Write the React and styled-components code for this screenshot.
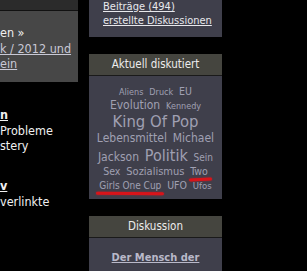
import React from 'react'
import styled, {createGlobalStyle} from 'styled-components'

const GlobalStyle = createGlobalStyle`
  html, body {
    margin: 0;
    padding: 0;
    background: #000;
  }
  body {
    font-family: "DejaVu Sans Condensed", "DejaVu Sans", sans-serif;
    color: #e6e6e6;
    overflow: hidden;
  }
`

const tags = [
  {label: 'Aliens', size: 9, lh: 12},
  {label: 'Druck', size: 9, lh: 12},
  {label: 'EU', size: 10.5, lh: 13},
  {label: 'Evolution', size: 12, lh: 15},
  {label: 'Kennedy', size: 9, lh: 12},
  {label: 'King Of Pop', size: 16.5, lh: 18},
  {label: 'Lebensmittel', size: 12, lh: 15},
  {label: 'Michael', size: 12, lh: 15},
  {label: 'Jackson', size: 12, lh: 15},
  {label: 'Politik', size: 16, lh: 19},
  {label: 'Sein', size: 10, lh: 13},
  {label: 'Sex', size: 10.5, lh: 13},
  {label: 'Sozialismus', size: 11, lh: 14},
  {label: 'Two', size: 10.5, lh: 13, marked: 'tilt'},
  {label: 'Girls One Cup', size: 10, lh: 13, marked: 'flat'},
  {label: 'UFO', size: 10.5, lh: 13},
  {label: 'Ufos', size: 9.5, lh: 12}
]

export default function App() {
  return (
    <>
      <GlobalStyle />
      <Page>
        <LeftColumn>
          <TopStrip />
          <InfoBox>
            <Line>en »</Line>
            <Line>
              <TextLink>k / 2012 und</TextLink>
            </Line>
            <Line>
              <TextLink>ein</TextLink>
            </Line>
          </InfoBox>
          <Entry>
            <EntryTitle>n</EntryTitle>
            <Line>Probleme</Line>
            <Line>stery</Line>
          </Entry>
          <Entry>
            <EntryTitle>v</EntryTitle>
            <Line>verlinkte</Line>
          </Entry>
        </LeftColumn>

        <RightColumn>
          <ProfileBox>
            <ProfileLink>Beiträge (494)</ProfileLink>
            <ProfileLink>erstellte Diskussionen</ProfileLink>
          </ProfileBox>

          <Panel>
            <PanelHeader>Aktuell diskutiert</PanelHeader>
            <CloudBody>
              {tags.map(tag => (
                <React.Fragment key={tag.label}>
                  <Tag size={tag.size} lh={tag.lh} marked={tag.marked}>
                    {tag.label}
                  </Tag>{' '}
                </React.Fragment>
              ))}
            </CloudBody>
          </Panel>

          <Panel>
            <PanelHeader>Diskussion</PanelHeader>
            <DiscussionBody>
              <DiscussionLink>Der Mensch der Zukunft</DiscussionLink>
            </DiscussionBody>
          </Panel>
        </RightColumn>
      </Page>
    </>
  )
}

const Page = styled.div`
  display: flex;
  gap: 11px;
  align-items: flex-start;
`

const LeftColumn = styled.div`
  width: 78px;
  flex: 0 0 78px;
  font-size: 12.5px;
  white-space: nowrap;
  overflow: hidden;
`

const TopStrip = styled.div`
  height: 10px;
  background: #2b2b2b;
  border-bottom: 1px solid #111;
`

const InfoBox = styled.div`
  background: #474747;
  padding: 14px 0 10px;
  color: #f0f0f0;
`

const Line = styled.div`
  line-height: 15.5px;
`

const TextLink = styled.a`
  color: #c9c9d6;
  text-decoration: underline;
`

const Entry = styled.div`
  margin-top: 24px;
  color: #f0f0f0;
  & + & {
    margin-top: 23px;
  }
`

const EntryTitle = styled.div`
  line-height: 17px;
  font-weight: bold;
  text-decoration: underline;
`

const RightColumn = styled.div`
  width: 133px;
  flex: 0 0 133px;
  display: flex;
  flex-direction: column;
  gap: 17px;
`

const ProfileBox = styled.div`
  background: #3f3f4b;
  padding: 0 0 10px 14px;
  display: flex;
  flex-direction: column;
  height: 27px;
`

const ProfileLink = styled.a`
  font-size: 11px;
  line-height: 14px;
  color: #e8e8ec;
  text-decoration: underline;
  white-space: nowrap;
`

const Panel = styled.div`
  display: flex;
  flex-direction: column;
`

const PanelHeader = styled.div`
  height: 21px;
  line-height: 21px;
  background: #45453f;
  border-bottom: 1px solid #1a1a1a;
  text-align: center;
  font-size: 11.5px;
  color: #ececec;
`

const CloudBody = styled.div`
  background: #3f3f4b;
  text-align: center;
  padding: 9px 4px 7px;
  font-size: 10px;
  line-height: 13px;
`

const Tag = styled.a`
  position: relative;
  display: inline-block;
  margin: 0 1.5px;
  font-size: ${props => props.size}px;
  line-height: ${props => props.lh}px;
  color: #a0a0b2;
  white-space: nowrap;
  ${props =>
    props.marked &&
    `
    &::after {
      content: '';
      position: absolute;
      left: ${props.marked === 'tilt' ? '-1px' : '-3px'};
      right: ${props.marked === 'tilt' ? '-4px' : '-3px'};
      bottom: -2px;
      height: 2.5px;
      border-radius: 2px;
      background: #d8141a;
      box-shadow: 0 0 2px rgba(230, 20, 30, 0.6);
      transform: rotate(${props.marked === 'tilt' ? '-3deg' : '0.5deg'});
    }
  `}
`

const DiscussionBody = styled.div`
  background: #3f3f4b;
  padding: 8px 6px 10px;
  text-align: center;
`

const DiscussionLink = styled.a`
  font-size: 11px;
  font-weight: bold;
  line-height: 14px;
  color: #b9b9c9;
  text-decoration: underline;
`
